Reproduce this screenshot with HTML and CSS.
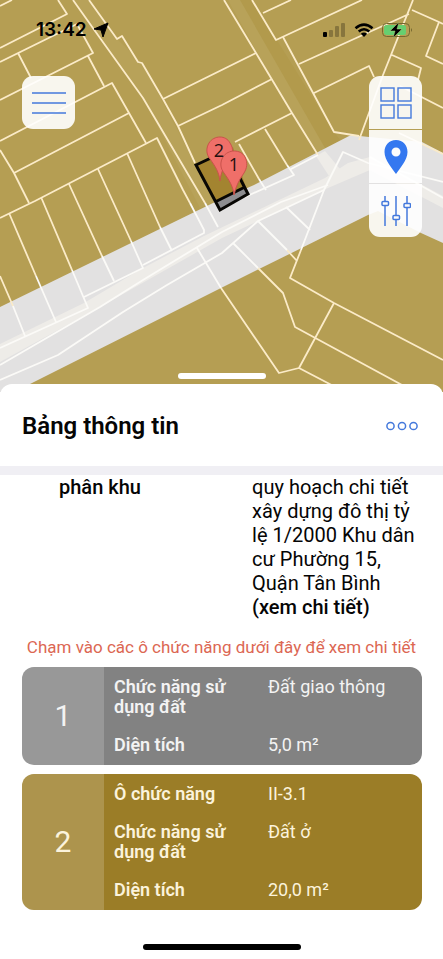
FILE: index.html
```html
<!DOCTYPE html>
<html lang="vi">
<head>
    <meta charset="UTF-8">
    <meta name="viewport" content="width=device-width, initial-scale=1.0">
    <title>Bảng thông tin</title>
    <link rel="stylesheet" href="styles.css">
</head>
<body>
    <section class="map">
        <svg class="map-canvas" viewBox="0 0 443 392" preserveAspectRatio="xMidYMin slice" aria-hidden="true">
            <rect width="443" height="392" fill="#b59e53"/>
            <!-- Small alleys -->
            <path d="M73 0H89L117 39L142 63L195 163L218 200L200 208L143 98L100 38Z" fill="#b8a259"/>
            <path d="M236 0H252L334 132L340 140L318 155L272 79Z" fill="#b29a4c"/>
            <path d="M228 0H240L325 148L318 155L272 79Z" fill="#b8a259"/>
            <!-- Main road -->
            <path d="M0 307L213 203L254 185L351 135L369 137L422 142L443 153V243L421 233L378 211L368 215L221 288L32 383L14 392H0Z" fill="#e2e1e1"/>
            <path d="M0 344L84 303L143 268L204 236L325 178L348 163L370 157L443 196V208L370 170L328 188L222 238L100 307L0 362Z" fill="#eeece8"/>
            <path d="M316 156L325 151L340 169L329 176Z" fill="#eeece8"/>
            <!-- Parcel borders -->
            <g fill="none" stroke="#fbebc8" stroke-width="1.8" stroke-linejoin="round">
                <path d="M0 6L12 0M58 0L67 14L0 48M0 62L77 24L93 53L0 100M18 53L31 78M88 56L104 86M0 141L112 83L146 143M14 173L129 113M0 150L14 173L29 203"/>
                <path d="M0 218L35 201L157 138L183 190L190 203M9 213L36 276M0 276L13 306M41 197L72 270M69 184L102 256M98 169L131 241M127 153L160 227"/>
                <path d="M73 0L100 38L143 98L205 203M89 0L117 39L122 36L138 62L142 63L163 99L178 126L195 163M163 99L256 53M178 126L222 105L272 79"/>
                <path d="M224 0L256 53L292 113L318 155M292 113L235 142M265 129L287 165M239 144L259 179M252 0L276 40L362 0M263 13L291 0"/>
                <path d="M283 37L334 132L359 136M359 140L383 75L413 0M299 64L409 14M314 93L369 66L374 77M392 55L421 68L418 80M412 10L439 22L443 24M439 22L426 56L443 64M400 86L443 108M399 133L443 154"/>
                <path d="M221 288L279 373L299 368L345 392M258 268L283 293L295 327L415 392M287 250L297 261M301 250L290 278L334 303L443 360M334 303L299 368"/>
            </g>
            <g fill="none" stroke="#fbfaf7" stroke-width="1.8" stroke-linejoin="round">
                <path d="M0 348L88 308L72 270M84 297L143 268L131 241M143 265L204 233L204 230L190 203M13 306L25 336M36 276L56 322M102 256L114 281M160 227L172 251M205 203L218 227"/>
                <path d="M0 365L100 307L143 280L222 232L281 202L328 185M0 380L58 355L123 312L167 285L222 253L258 221L288 207L324 190L343 152L368 163L443 182M197 248L221 288"/>
                <path d="M233 243L258 268M258 221L287 250M286 207L310 230M324 190L301 250M318 155L291 169M287 165L294 175L245 197M259 179L266 190M370 157L443 198"/>
            </g>
            <!-- Selected parcel -->
            <path d="M196 165L233 147L248 194L220 210Z" fill="#a38430"/>
            <path d="M215 201L244 187L248 194L220 210Z" fill="#8d8d90"/>
            <path d="M196 165L226 151L248 194L220 210ZM215 202L245 187" fill="none" stroke="#080704" stroke-width="3"/>
            <g fill="#ef6f69" stroke="#c9534b" stroke-width="1">
                <path d="M220 181C219 172 215 166 210 159C206 154 206 148 209 143C214 135 226 135 230 143C234 149 233 154 229 159C224 166 221 172 220 181Z"/>
                <path d="M234 195C233 186 229 180 224 173C220 168 220 162 223 157C228 149 241 149 245 157C248 163 247 168 244 173C239 180 236 186 234 195Z"/>
            </g>
            <g class="pin-number" text-anchor="middle">
                <text x="219" y="157">2</text>
                <text x="234" y="171">1</text>
            </g>
        </svg>

        <div class="status-bar">
            <div class="status-time">
                <span>13:42</span>
                <svg width="16" height="16" viewBox="0 0 16 16"><path d="M15 1L10 15L8 8L1 7Z" fill="#000" stroke="#000" stroke-linejoin="round"/></svg>
            </div>
            <div class="status-icons">
                <svg width="23" height="15" viewBox="0 0 23 15">
                    <rect x="0" y="9" width="4" height="5" rx="1" fill="#000"/>
                    <g fill="#000" opacity="0.25"><rect x="6" y="7" width="4" height="7" rx="1"/><rect x="12" y="3" width="4" height="11" rx="1"/><rect x="18" y="0" width="4" height="14" rx="1"/></g>
                </svg>
                <svg width="20" height="15" viewBox="0 0 20 15">
                    <path d="M1.5 5.2Q10 -2 18.5 5.2M4.7 8.5Q10 4 15.3 8.5" fill="none" stroke="#000" stroke-width="2.6"/>
                    <path d="M10 14L6.8 10.8Q10 8.2 13.2 10.8Z" fill="#000"/>
                </svg>
                <svg width="31" height="16" viewBox="0 0 31 16">
                    <rect x="0.5" y="1.5" width="27" height="13" rx="4" fill="none" stroke="#75672f"/>
                    <rect x="2" y="3" width="22" height="10" rx="2.5" fill="#66cf70"/>
                    <path d="M29 6Q31 8 29 10Z" fill="#75672f"/>
                    <path d="M17 0L8 9H13L11 16L20 7H15Z" fill="#000" stroke="#b5cf78" stroke-width="0.5"/>
                </svg>
            </div>
        </div>

        <div class="map-controls">
            <button class="menu-btn" aria-label="Menu">
                <svg width="34" height="22" viewBox="0 0 34 22"><path d="M0 1H34M0 11H34M0 21H34" stroke="#4479dc" stroke-width="1.6"/></svg>
            </button>
            <div class="tool-group">
                <button aria-label="Lớp bản đồ">
                    <svg width="32" height="32" viewBox="0 0 32 32" fill="none" stroke="#4479dc" stroke-width="1.4"><rect x="1" y="1" width="13" height="13"/><rect x="18" y="1" width="13" height="13"/><rect x="1" y="18" width="13" height="13"/><rect x="18" y="18" width="13" height="13"/></svg>
                </button>
                <button aria-label="Vị trí">
                    <svg width="24" height="34" viewBox="0 0 24 34"><path fill-rule="evenodd" d="M12 0C5 0 0.500 5 0.500 12C0.500 20 8 28 12 34C16 28 23.500 20 23.500 12C23.500 5 19 0 12 0ZM12 7.500A4.500 4.500 0 1 1 12 16.500A4.500 4.500 0 1 1 12 7.500Z" fill="#3478f0"/></svg>
                </button>
                <button aria-label="Bộ lọc">
                    <svg width="30" height="30" viewBox="0 0 30 30" fill="none" stroke="#4479dc" stroke-width="1.5"><path d="M4 0V5M4 10V30M15 0V19M15 24V30M26 0V7M26 12V30"/><rect x="1" y="5.5" width="6.5" height="4" rx="1"/><rect x="12" y="19.5" width="6.5" height="4" rx="1"/><rect x="23" y="7.5" width="6.5" height="4" rx="1"/></svg>
                </button>
            </div>
        </div>

        <div class="drag-handle"></div>
    </section>

    <main class="sheet">
        <header class="sheet-header">
            <h1>Bảng thông tin</h1>
            <button class="more-btn" aria-label="Thêm">
                <svg width="32" height="10" viewBox="0 0 32 10" fill="none" stroke="#4479dc" stroke-width="1.5"><circle cx="4.5" cy="5" r="3.6"/><circle cx="16" cy="5" r="3.6"/><circle cx="27.5" cy="5" r="3.6"/></svg>
            </button>
        </header>

        <dl class="plan-info">
            <dt>phân khu</dt>
            <dd>quy hoạch chi tiết xây dựng đô thị tỷ lệ 1/2000 Khu dân cư Phường 15, Quận Tân Bình <a href="#">(xem chi tiết)</a></dd>
        </dl>

        <p class="hint">Chạm vào các ô chức năng dưới đây để xem chi tiết</p>

        <div class="zones">
            <button class="zone zone-road">
                <span class="zone-number">1</span>
                <span class="zone-details">
                    <span class="zone-label">Chức năng sử dụng đất</span>
                    <span>Đất giao thông</span>
                    <span class="zone-label">Diện tích</span>
                    <span>5,0 m²</span>
                </span>
            </button>
            <button class="zone zone-home">
                <span class="zone-number">2</span>
                <span class="zone-details">
                    <span class="zone-label">Ô chức năng</span>
                    <span>II-3.1</span>
                    <span class="zone-label">Chức năng sử dụng đất</span>
                    <span>Đất ở</span>
                    <span class="zone-label">Diện tích</span>
                    <span>20,0 m²</span>
                </span>
            </button>
        </div>

        <div class="home-indicator"></div>
    </main>
</body>
</html>
```
FILE: styles.css
```css
/* Basic reset and font settings */
* {
    box-sizing: border-box;
    margin: 0;
    padding: 0;
}
body {
    display: flex;
    flex-direction: column;
    min-height: 100vh;
    background-color: #fff;
    color: #050505;
    font-family: Roboto, "Noto Sans", sans-serif;
}
button {
    border: none;
    background: none;
    color: inherit;
    font-family: inherit;
    cursor: pointer;
}
svg {
    display: block;
}
/* Map area */
.map {
    position: relative;
    display: flex;
    flex-direction: column;
    height: 392px;
    flex-shrink: 0;
    overflow: hidden;
}
/* Map drawing sits behind the controls */
.map-canvas {
    position: absolute;
    top: 0;
    left: 0;
    width: 100%;
    height: 100%;
    z-index: -1;
}
.pin-number {
    font-family: "Open Sans", sans-serif;
    font-size: 18px;
    fill: #24100f;
}
.status-bar {
    display: flex;
    justify-content: space-between;
    align-items: center;
    padding: 18px 30px 0 36px;
}
.status-time {
    display: flex;
    align-items: center;
    gap: 6px;
    font-family: Inter, sans-serif;
    font-size: 19px;
    font-weight: 600;
    line-height: 24px;
    color: #000;
}
.status-icons {
    display: flex;
    align-items: center;
    gap: 8px;
}
.map-controls {
    display: flex;
    justify-content: space-between;
    align-items: flex-start;
    padding: 34px 21px 0 22px;
}
.menu-btn {
    display: flex;
    align-items: center;
    justify-content: center;
    width: 53px;
    height: 53px;
    border-radius: 11px;
    background-color: rgba(255, 255, 255, 0.9);
}
/* Stacked tool buttons on the right */
.tool-group {
    display: flex;
    flex-direction: column;
    gap: 1px;
    border-radius: 11px;
    overflow: hidden;
}
.tool-group button {
    display: flex;
    align-items: center;
    justify-content: center;
    width: 53px;
    height: 53px;
    background-color: rgba(255, 255, 255, 0.9);
}
.drag-handle {
    width: 88px;
    height: 6px;
    margin: auto auto 13px;
    border-radius: 3px;
    background-color: #fff;
}
/* Information sheet */
.sheet {
    position: relative;
    display: flex;
    flex-direction: column;
    flex: 1;
    margin-top: -8px;
    border-radius: 12px 12px 0 0;
    background-color: #fff;
}
.sheet-header {
    display: flex;
    justify-content: space-between;
    align-items: center;
    height: 91px;
    padding: 2px 25px 0 22px;
    border-bottom: 9px solid #f0eff4;
}
.sheet-header h1 {
    font-size: 24px;
    font-weight: 600;
    line-height: 28px;
}
.plan-info {
    display: grid;
    grid-template-columns: 8fr 7fr;
    padding: 0 22px 0 59px;
    font-size: 20px;
    line-height: 24px;
}
.plan-info dt,
.plan-info a {
    font-weight: 500;
}
.plan-info a {
    color: inherit;
    text-decoration: none;
}
.hint {
    margin: 18px 0 10px;
    font-size: 17px;
    line-height: 20px;
    text-align: center;
    color: #dc6753;
}
/* Zone cards */
.zones {
    display: flex;
    flex-direction: column;
    gap: 9px;
    padding: 0 21px 0 22px;
}
.zone {
    display: flex;
    border-radius: 12px;
    overflow: hidden;
    text-align: left;
    font-size: 18px;
    line-height: 20px;
}
.zone-number {
    display: flex;
    align-items: center;
    justify-content: center;
    align-self: stretch;
    width: 82px;
    font-size: 30px;
    background-color: rgba(255, 255, 255, 0.18);
}
.zone-details {
    flex: 1;
    display: grid;
    grid-template-columns: 142px 1fr;
    gap: 18px 12px;
    padding: 10px;
}
.zone-label {
    font-weight: 600;
}
.zone-road {
    background-color: #828282;
    color: #f3f3f3;
}
.zone-home {
    background-color: #9b7d27;
    color: #fbf3dc;
}
.home-indicator {
    width: 158px;
    height: 6px;
    margin: auto auto 9px;
    border-radius: 3px;
    background-color: #000;
}
```
